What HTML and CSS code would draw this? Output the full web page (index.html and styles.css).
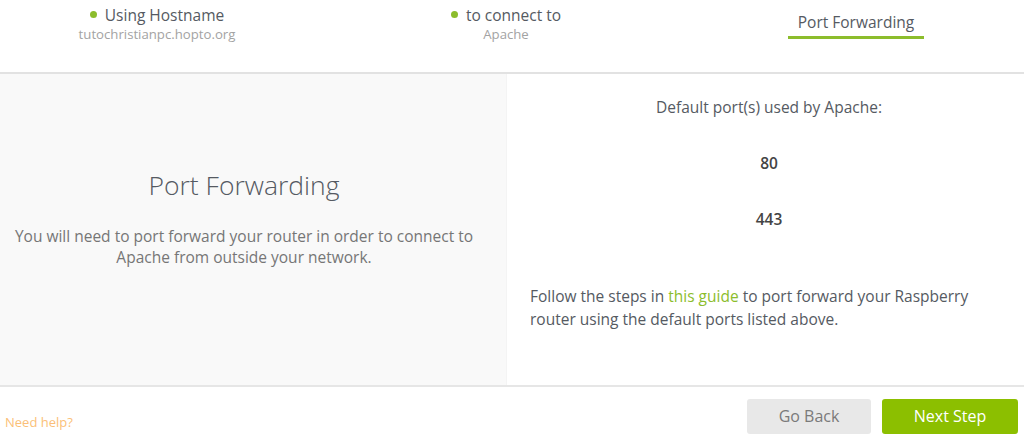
FILE: index.html
```html
<!DOCTYPE html>
<html>
<head>
<meta charset="utf-8">
<link rel="stylesheet" href="styles.css">
</head>
<body>
<header class="steps">
  <div class="step step-1">
    <div class="step-title"><span class="dot"></span>Using Hostname</div>
    <div class="step-sub">tutochristianpc.hopto.org</div>
  </div>
  <div class="step step-2">
    <div class="step-title"><span class="dot"></span>to connect to</div>
    <div class="step-sub">Apache</div>
  </div>
  <div class="step step-3">
    <div class="step-title active">Port Forwarding</div>
  </div>
</header>
<main class="content">
  <section class="left">
    <h1 class="left-title">Port Forwarding</h1>
    <p class="left-text">You will need to port forward your router in order to connect to Apache from outside your network.</p>
  </section>
  <section class="right">
    <p class="ports-label">Default port(s) used by Apache:</p>
    <p class="port">80</p>
    <p class="port">443</p>
    <p class="guide">Follow the steps in <a href="#" class="link">this guide</a> to port forward your Raspberry router using the default ports listed above.</p>
  </section>
</main>
<footer class="footer">
  <a href="#" class="help">Need help?</a>
  <div class="buttons">
    <button class="btn btn-back">Go Back</button>
    <button class="btn btn-next">Next Step</button>
  </div>
</footer>
</body>
</html>
```
FILE: styles.css
```css
* { box-sizing: border-box; }
html, body { margin: 0; padding: 0; }
body {
  width: 1024px;
  height: 436px;
  overflow: hidden;
  font-family: "Open Sans", "Liberation Sans", sans-serif;
  background: #fff;
  color: #555;
}
.steps {
  height: 74px;
  display: grid;
  grid-template-columns: 314px 384px 1fr;
  border-bottom: 2px solid #e2e2e2;
  background: #fff;
}
.step { text-align: center; padding-top: 1px; }
.step-title {
  font-size: 15.5px;
  line-height: 22px;
  color: #555a62;
  display: inline-flex;
  align-items: center;
}
.dot {
  width: 7px;
  height: 7px;
  border-radius: 50%;
  background: #8cbd2c;
  margin-right: 8px;
}
.step-sub {
  font-size: 13.2px;
  line-height: 17px;
  color: #a3a3a3;
}
.step-3 { padding-top: 11px; padding-right: 10px; }
.step-title.active {
  padding: 0 10px 3px;
  border-bottom: 3px solid #8cbd2c;
}
.content {
  display: flex;
  height: 313px;
  border-bottom: 2px solid #e6e6e6;
}
.left {
  width: 507px;
  background: #f9f9f9;
  border-right: 1px solid #f4f4f4;
  padding: 94px 20px 0 2px;
  text-align: center;
}
.left-title {
  margin: 0;
  font-size: 26.5px;
  font-weight: 300;
  line-height: 34px;
  color: #555a62;
}
.left-text {
  margin: 24px 0 0;
  font-size: 15.5px;
  line-height: 21px;
  color: #767676;
}
.right {
  flex: 1;
  padding: 22px 18px 0 23px;
}
.ports-label {
  margin: 0;
  text-align: center;
  font-size: 15.5px;
  line-height: 22px;
  color: #555a62;
  padding-left: 2px;
}
.port {
  margin: 34px 0 0;
  text-align: center;
  font-size: 15.5px;
  font-weight: 600;
  line-height: 22px;
  color: #444;
  padding-left: 2px;
}
.guide {
  margin: 55px 0 0;
  font-size: 15.5px;
  line-height: 23px;
  color: #555a62;
}
.link { color: #8cbd2c; text-decoration: none; }
.footer {
  height: 48px;
  display: flex;
  align-items: center;
  justify-content: space-between;
  padding: 0 6px 0 5px;
}
.help {
  font-size: 13px;
  color: #fbbf78;
  text-decoration: none;
  margin-top: 22px;
}
.buttons { display: flex; gap: 11px; margin-top: 10px; }
.btn {
  font-family: "Open Sans", "Liberation Sans", sans-serif;
  font-size: 16px;
  height: 35px;
  border: none;
  border-radius: 3px;
  cursor: pointer;
}
.btn-back {
  width: 124px;
  background: #e8e8e8;
  color: #7a7a7a;
}
.btn-next {
  width: 136px;
  background: #8cbf00;
  color: #fff;
}
```
